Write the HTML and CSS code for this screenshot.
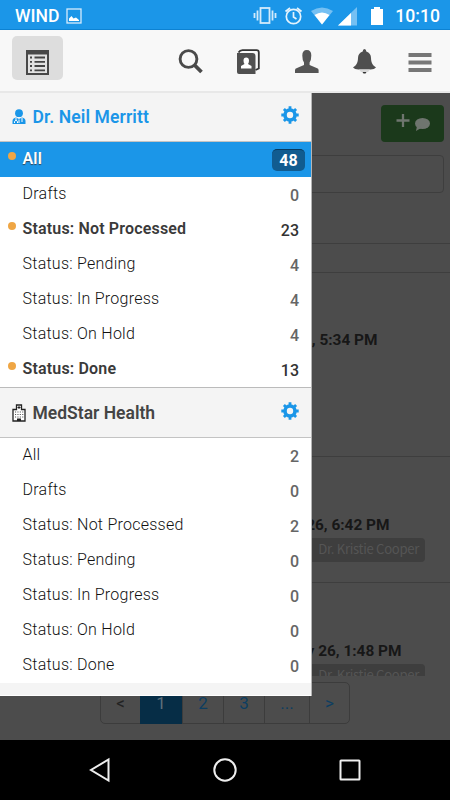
FILE: index.html
```html
<!DOCTYPE html>
<html lang="en">
<head>
<meta charset="utf-8">
<title>Inbox</title>
<link rel="stylesheet" href="styles.css">
</head>
<body>
<svg class="defs" width="0" height="0">
  <symbol id="gear" viewBox="0 0 18 18">
    <circle cx="9" cy="9" r="5" fill="none" stroke="currentColor" stroke-width="3.6"/>
    <path d="M9 0.3V3M9 15V17.7M0.3 9H3M15 9H17.7M2.9 2.9L4.7 4.7M13.3 13.3L15.1 15.1M2.9 15.1L4.7 13.3M13.3 4.7L15.1 2.9" stroke="currentColor" stroke-width="2.8"/>
  </symbol>
</svg>
<div class="phone">
  <header class="status">
    <span class="carrier">WIND</span>
    <svg class="pic" width="16" height="16" viewBox="0 0 16 16"><rect x="1" y="1" width="14" height="14" fill="none" stroke="#d6ecfc" stroke-width="1.3"/><path d="M3 13V10.500L5.500 8L7.500 10.500L10 9.500L13 12V13Z" fill="#fff"/></svg>
    <svg class="signals" width="136" height="22" viewBox="0 0 136 22">
      <g fill="none" stroke="#d3eafb" stroke-width="1.800"><rect x="7.500" y="3" width="9" height="15"/><path d="M4.500 5.500V15.500M1.500 8V13M19.500 5.500V15.500M22.500 8V13"/></g>
      <g fill="none" stroke="#e4f3fd" stroke-width="1.700"><circle cx="40.500" cy="11.500" r="7.200"/><path d="M40.500 7V12L43.500 14M32.500 6.500L37 3M44 3L48.500 6.500"/></g>
      <path d="M58 6Q69 -1 80 6L69 19.500Z" fill="#75c0f3"/><path d="M61.500 10Q69 5 76.500 10L69 19.500Z" fill="#fff"/>
      <path d="M85 20.500L104 2V20.500Z" fill="#75c0f3"/><path d="M85 20.500L98 8V20.500Z" fill="#fff"/>
      <path d="M118 4H121V2H127V4H130V20H118Z" fill="#fff"/>
    </svg>
    <span class="clock">10:10</span>
  </header>
  <nav class="toolbar">
    <div class="tab"><svg width="24" height="26" viewBox="0 0 24 26"><path d="M0 0H23V25H0Z" fill="#484848"/><path d="M2 4.500H21V23H2Z" fill="#e2e2e2"/><path d="M4 7.500H6M8.500 7.500H19M4 11.800H6M8.500 11.800H19M4 16H6M8.500 16H19M4 20.300H6M8.500 20.300H19" stroke="#444" stroke-width="1.800"/></svg></div>
    <svg class="tool" width="26" height="26" viewBox="0 0 26 26"><circle cx="10.500" cy="10" r="8.400" fill="none" stroke="#4a4a4a" stroke-width="2.900"/><path d="M16.500 16L23.500 23" stroke="#4a4a4a" stroke-width="3.800"/></svg>
    <svg class="tool" width="26" height="26" viewBox="0 0 26 26"><path d="M2.500 3.500Q4 1.200 6.500 1.200H20.500Q22.800 1.200 22.800 3.500V19.500L19.500 21" fill="none" stroke="#333" stroke-width="1.800"/><path d="M1 4H16.500Q19.500 4 19.500 7V25H3Q1 25 1 23Z" fill="#505050"/><path d="M5 19.500V17L8.500 15Q7.500 13.500 7.500 11.500Q7.500 8.500 10.200 8.500T13 11.500Q13 13.500 12 15L15.500 17V19.500Z" fill="#fff"/></svg>
    <svg class="tool" width="26" height="26" viewBox="0 0 26 26"><path d="M1 24V21Q1 19.500 3 19L10 16V13.500Q8.300 11 8.300 6.500Q8.300 1 12.800 1T17.300 6.500Q17.300 11 15.600 13.500V16L22.600 19Q24.600 19.500 24.600 21V24Z" fill="#555"/></svg>
    <svg class="tool" width="26" height="26" viewBox="0 0 26 26"><path d="M12.500 0Q14.300 0 14.300 2.500Q19 4 19 9Q19 14 21.500 16.500L24 18.500Q22.500 20.500 18.500 20.500H6.500Q2.500 20.500 1 18.500L3.500 16.500Q6 14 6 9Q6 4 10.700 2.500Q10.700 0 12.500 0Z" fill="#4f4f4f"/><path d="M7 20.500H18L16 23H9Z" fill="#d8d8d8"/><path d="M10.500 23H14.500L13.500 24.500H11.500Z" fill="#333"/></svg>
    <svg class="burger" width="24" height="20" viewBox="0 0 24 20"><path d="M.5 2H23.500M.5 9.500H23.500M.5 17H23.500" stroke="#777" stroke-width="3.900"/></svg>
  </nav>
  <main class="main">
    <section class="page">
      <div class="content">
        <div class="compose"><svg width="34" height="20" viewBox="0 0 34 20"><path d="M7 1V14M.500 7.500H13.500" stroke="#6f756f" stroke-width="2.300"/><ellipse cx="26.500" cy="10.500" rx="7.500" ry="5.500" fill="#6f756f"/><path d="M21 13L20 18L26 14.500Z" fill="#6f756f"/></svg></div>
        <div class="search"></div>
        <div class="bar"></div>
        <article class="message first"><time>May 26, 5:34 PM</time></article>
        <article class="message second"><time>May 26, 6:42 PM</time><span class="chip">Dr. Kristie Cooper</span></article>
        <article class="message third"><time>May 26, 1:48 PM</time><span class="chip">Dr. Kristie Cooper</span></article>
      </div>
      <div class="pager"><span class="prev">&lt;</span><span class="current">1</span><span>2</span><span>3</span><span class="more">...</span><span>&gt;</span></div>
    </section>
    <aside class="drawer">
      <h2 class="group doctor"><svg class="badge-icon" width="14" height="16" viewBox="0 0 14 16"><circle cx="7" cy="4.200" r="3.900" fill="#1a96e8"/><path d="M.5 15V12Q.5 9 4 8.500L7 10L10 8.500Q13.500 9 13.500 12V15Z" fill="#1a96e8"/><path d="M4 9V11M2.500 14V12.500Q4 9.800 5.500 12.500V14M10 9V13M7 10.500V14" stroke="#fff" fill="none"/></svg><span>Dr. Neil Merritt</span><svg class="gear" width="18" height="18"><use href="#gear"/></svg></h2>
      <ul>
        <li class="unread selected"><span>All</span><b>48</b></li>
        <li><span>Drafts</span><b>0</b></li>
        <li class="unread"><span>Status: Not Processed</span><b>23</b></li>
        <li><span>Status: Pending</span><b>4</b></li>
        <li><span>Status: In Progress</span><b>4</b></li>
        <li><span>Status: On Hold</span><b>4</b></li>
        <li class="unread"><span>Status: Done</span><b>13</b></li>
      </ul>
      <h2 class="group clinic"><svg class="badge-icon" width="14" height="18" viewBox="0 0 14 18"><path d="M1 17V5.500H4.500V1H9.500V5.500H13V17Z" fill="#fff" stroke="#222" stroke-width="1.300"/><path d="M7 2V5M5.500 3.500H8.500" stroke="#222"/><path d="M3 8H11.500M3 10.500H11.500M3 13H11.500" stroke="#555" stroke-width="1.100" stroke-dasharray="1.100 1.300"/><path d="M5 17V14.500H9V17Z" fill="#222"/></svg><span>MedStar Health</span><svg class="gear" width="18" height="18"><use href="#gear"/></svg></h2>
      <ul>
        <li><span>All</span><b>2</b></li>
        <li><span>Drafts</span><b>0</b></li>
        <li><span>Status: Not Processed</span><b>2</b></li>
        <li><span>Status: Pending</span><b>0</b></li>
        <li><span>Status: In Progress</span><b>0</b></li>
        <li><span>Status: On Hold</span><b>0</b></li>
        <li><span>Status: Done</span><b>0</b></li>
      </ul>
      <div class="drawer-end"></div>
    </aside>
  </main>
  <footer class="system">
    <svg width="24" height="26" viewBox="0 0 24 26"><path d="M20.500 2.500V23.500L3 13Z" fill="none" stroke="#eee" stroke-width="2"/></svg>
    <svg width="26" height="26" viewBox="0 0 26 26"><circle cx="13" cy="13" r="10.700" fill="none" stroke="#eee" stroke-width="2"/></svg>
    <svg width="24" height="26" viewBox="0 0 24 26"><rect x="2.500" y="3.500" width="19" height="19" rx=".5" fill="none" stroke="#eee" stroke-width="2"/></svg>
  </footer>
</div>
</body>
</html>
```
FILE: styles.css
```css
* { box-sizing: border-box; }
body { margin: 0; font-family: Roboto, "Liberation Sans", sans-serif; }
.defs { display: block; }
.phone { width: 450px; height: 800px; overflow: hidden; display: flex; flex-direction: column; }
.status { height: 30px; background: #1b96e8; border-bottom: 1px solid #0d82d2; color: #fff; display: flex; align-items: center; padding: 2px 10px 0 15px; flex: none; }
.carrier { font-size: 17.6px; font-weight: 500; width: 50px; }
.pic { display: block; margin-left: 1px; }
.signals { margin-left: auto; margin-right: 6px; }
.clock { font-size: 17.6px; font-weight: 500; }
.toolbar { height: 63px; flex: none; background: #f8f8f8; border-bottom: 2px solid #e8e8e8; display: flex; align-items: flex-start; padding: 6px 18px 0 12px; }
.tab { width: 51px; height: 44px; border-radius: 5px; background: #ddd; padding: 14px 0 0 14px; margin-right: 115px; }
.tool { margin: 13px 32px 0 0; flex: none; }
.burger { margin: 17px 0 0 -2px; flex: none; }
.main { position: relative; height: 647px; flex: none; background: #4c4c4c; }
.page { height: 647px; display: flex; flex-direction: column; align-items: center; }
.content { width: 100%; height: 583px; overflow: hidden; flex: none; }
.compose { width: 63px; height: 37px; margin: 12px 6px 0 auto; background: #1b391b; border-radius: 4px; padding: 8px 0 0 15px; }
.search { height: 38px; margin: 13px 6px 0 6px; border: 1.5px solid #3e3e3e; border-radius: 4px; }
.bar { height: 30px; margin-top: 49.5px; border-top: 1px solid #3e3e3e; border-bottom: 1px solid #3e3e3e; }
.message { display: flex; flex-direction: column; align-items: flex-start; border-bottom: 1px solid #3e3e3e; font-size: 15.4px; font-weight: 700; color: #171717; }
.message time { line-height: 20px; }
.first { height: 184.5px; padding: 57.5px 0 0 261px; }
.second { height: 126px; padding: 58px 0 0 273px; }
.third { height: 120px; padding: 58px 0 0 285px; }
.chip { align-self: flex-end; margin: 3px 25px 0 0; height: 24px; padding: 0 6px 0 12px; border-radius: 4px; background: #3e3e3e; color: #555; font: 400 13.1px/21px "Noto Sans CJK SC", "Noto Sans", sans-serif; letter-spacing: -.3px; }
.pager { display: flex; margin: 6px 0 0; width: 250px; height: 42px; border: 1px solid #3c3c3c; border-radius: 5px; font-size: 17px; line-height: 40px; color: #0c3e61; text-align: center; }
.pager span { width: 41px; border-right: 1px solid #3c3c3c; }
.pager span:last-child { border-right: 0; flex: 1; }
.pager .prev { color: #222; width: 39px; border: 0; }
.pager .current { width: 43px; background: #062d46; color: #5d6f7c; margin-bottom: -1px; }
.pager .more { width: 45px; }
.drawer { position: absolute; left: 0; top: 0; width: 312px; height: 603px; background: #fff; border-right: 1px solid #b5b5b5; }
.group { margin: 0; height: 49px; background: #f4f4f4; border-bottom: 1px solid #c3c3c3; display: flex; align-items: flex-start; padding: 13px 12px 0; font-size: 17.5px; line-height: 20px; font-weight: 600; color: #444; }
.badge-icon { width: 14px; margin: 3px 6.5px 0 0; flex: none; }
.gear { margin-left: auto; color: #1a96e8; }
.doctor { color: #1b96e8; letter-spacing: .12px; }
.doctor span { margin-top: 1px; }
.clinic { height: 51px; border-top: 1px solid #bbb; padding-top: 14px; }
.clinic .badge-icon { margin-top: 2px; }
.clinic span { margin-top: 1px; }
ul { list-style: none; margin: 0; padding: 0; }
li { height: 35px; padding: 0 12px 0 22.5px; display: flex; justify-content: space-between; font-size: 16px; line-height: 33px; font-weight: 300; color: #111; }
li span { letter-spacing: .25px; }
li b { font-weight: 500; color: #666; line-height: 37px; }
.unread { position: relative; font-weight: 600; color: #3a3a3a; }
.unread span { letter-spacing: .17px; }
.unread b { font-weight: 500; color: #333; }
.unread::before { content: ""; position: absolute; left: 8px; top: 10px; width: 8px; height: 8px; border-radius: 50%; background: #efa644; }
.selected { background: #1b96e8; color: #fff; padding-right: 6px; text-shadow: 0 1px 1px #345; }
.selected b { margin-top: 7px; width: 33px; height: 22px; border-radius: 5px; background: #115c90; border-top: 1px solid #07395e; color: #fff; font-weight: 700; line-height: 21px; text-align: center; text-shadow: none; }
.drawer-end { height: 13px; background: #f4f4f4; border-bottom: 1px solid #fff; }
.system { height: 60px; flex: none; background: #000; display: flex; justify-content: center; align-items: center; gap: 100px; }
```
